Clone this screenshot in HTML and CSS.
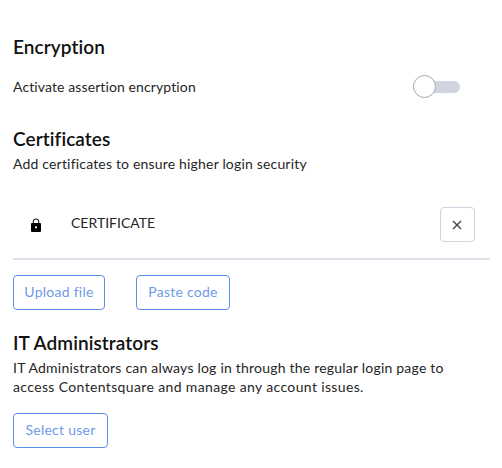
FILE: index.html
```
<!DOCTYPE html>
<html lang="en">
<head>
    <meta charset="UTF-8">
    <meta name="viewport" content="width=device-width, initial-scale=1.0">
    <title>Encryption</title>
    <link rel="stylesheet" href="styles.css">
</head>
<body>

    <section class="encryption">
        <h2>Encryption</h2>
        <div class="setting-row">
            <label for="encryption-toggle">Activate assertion encryption</label>
            <button class="toggle" id="encryption-toggle" type="button" role="switch" aria-checked="false">
                <span class="knob"></span>
            </button>
        </div>
    </section>

    <section class="certificates">
        <h2>Certificates</h2>
        <p class="intro">Add certificates to ensure higher login security</p>

        <div class="certificate">
            <svg class="lock" width="12" height="14" viewBox="0 0 12 14">
                <path d="M3.3 6V3.7a2.7 2.7 0 0 1 5.4 0V6" fill="none" stroke="#222" stroke-width="1.1"/>
                <path fill-rule="evenodd" d="M2 5h8a1 1 0 0 1 1 1v7a1 1 0 0 1-1 1H2a1 1 0 0 1-1-1V6a1 1 0 0 1 1-1zM6 8.2a1.1 1.1 0 1 0 0 2.2a1.1 1.1 0 0 0 0-2.2z"/>
            </svg>
            <span class="certificate-name">CERTIFICATE</span>
            <button class="remove" type="button" aria-label="Remove">
                <svg width="10" height="10" viewBox="0 0 10 10">
                    <path d="M1 1l8 8M9 1l-8 8" fill="none" stroke="#444" stroke-width="1.4"/>
                </svg>
            </button>
        </div>

        <div class="actions">
            <button class="btn upload" type="button">Upload file</button>
            <button class="btn paste" type="button">Paste code</button>
        </div>
    </section>

    <section class="admins">
        <h2>IT Administrators</h2>
        <p>
            IT Administrators can always log in through the regular login page to<br>
            <span class="wide">access Contentsquare and manage any account issues.</span>
        </p>
        <button class="btn select" type="button">Select user</button>
    </section>

</body>
</html>
```

FILE: styles.css
```
* {
    box-sizing: border-box;
}
body {
    font-family: 'Lato', 'Open Sans', sans-serif;
    margin: 0;
    padding: 35px 12px 0 13px;
    background-color: #fff;
    color: #262626;
    font-size: 14px;
    line-height: 19px;
    letter-spacing: 0.21px;
}
h2 {
    margin: 0;
    color: #111;
    font-size: 19px;
    line-height: 24px;
    font-weight: 600;
    letter-spacing: 0.08px;
}
p {
    margin: 3px 0 0;
}
button {
    padding: 0;
    font-family: inherit;
    letter-spacing: inherit;
    cursor: pointer;
}
label {
    letter-spacing: 0.11px;
}
.setting-row {
    display: flex;
    align-items: center;
    justify-content: space-between;
    height: 23px;
    margin-top: 16px;
    padding-right: 30px;
}
.toggle {
    display: flex;
    align-items: center;
    width: 47px;
    height: 12px;
    border: none;
    border-radius: 6px;
    background-color: #d0d4df;
}
.knob {
    width: 23px;
    height: 23px;
    border: 1px solid #a5a7b0;
    border-radius: 50%;
    background-color: #fff;
}
.certificates {
    margin-top: 29px;
}
.intro {
    height: 20px;
    line-height: 20px;
    letter-spacing: 0.18px;
}
.certificate {
    display: flex;
    align-items: center;
    height: 86px;
    padding: 17px 15px 0 17px;
    border-bottom: 2px solid #dfe2ec;
}
.certificate-name {
    margin-left: 29px;
    padding-bottom: 5px;
    letter-spacing: 0;
}
.remove {
    display: flex;
    align-items: center;
    justify-content: center;
    width: 35px;
    height: 35px;
    margin-left: auto;
    padding-right: 1px;
    border: 1px solid #cfd3df;
    border-radius: 4px;
    background-color: #fff;
}
.actions {
    display: flex;
    gap: 31px;
    margin-top: 15px;
}
.btn {
    height: 35px;
    padding-bottom: 2px;
    border: 1px solid #5c8fe6;
    border-radius: 4px;
    background-color: #fff;
    color: #7199e8;
    font-size: 14px;
    letter-spacing: 0.25px;
}
.upload {
    width: 92px;
}
.paste {
    width: 94px;
}
.select {
    width: 95px;
    margin-top: 17px;
}
.admins {
    margin-top: 21px;
}
.wide {
    letter-spacing: 0.36px;
}
```
